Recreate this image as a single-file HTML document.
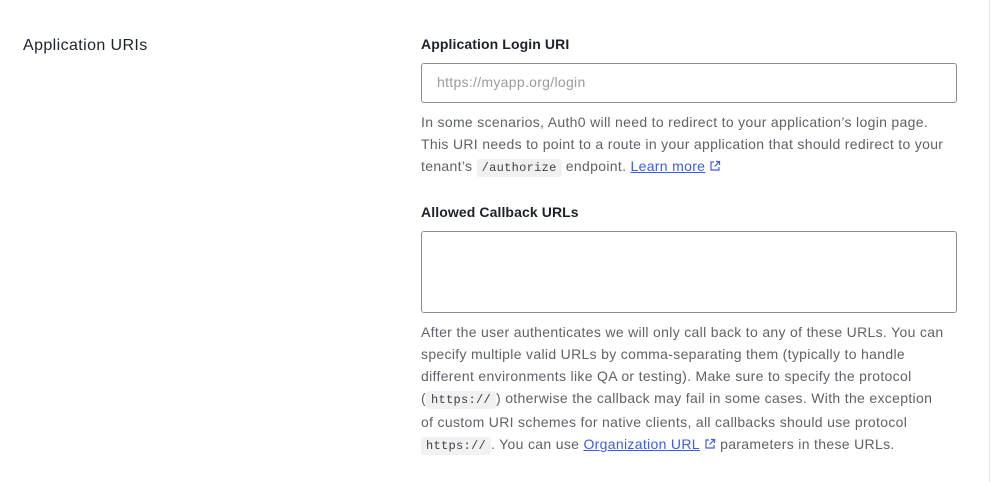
<!DOCTYPE html>
<html><head><style>
body{margin:0;width:996px;height:482px;background:#fff;font-family:"Liberation Sans",sans-serif;color:#1e212a;position:relative;overflow:hidden}
.vl{position:absolute;left:989px;top:0;width:1px;height:482px;background:#e6e6e6}
.h{position:absolute;left:23px;top:37px;font-size:16px;letter-spacing:0.4px}
.col{position:absolute;left:421px;width:560px}
.lab{font-size:14px;font-weight:bold;color:#1e212a;letter-spacing:0.1px}
.box{border:1px solid #8c8c8c;border-radius:3px;box-sizing:border-box;width:536px}
.p{font-size:14px;line-height:22px;color:#606269;letter-spacing:0.32px;white-space:nowrap}
code{font-family:"Liberation Mono",monospace;font-size:12px;background:#f1f1f1;color:#3f4148;padding:2px 5px;border-radius:3px;letter-spacing:0.3px}
a{color:#3d5ce6;text-decoration:underline}
.ic{display:inline-block;vertical-align:-1px;margin-left:4px}
</style></head><body>
<div class="vl"></div>
<div class="h">Application URIs</div>
<div class="col" style="top:36px"><div class="lab">Application Login URI</div></div>
<div class="col" style="top:63px"><div class="box" style="height:40px;padding:10px 15px;font-size:14px;color:#9a9ba0;letter-spacing:0.3px">https://myapp.org/login</div></div>
<div class="col p" style="top:111px">In some scenarios, Auth0 will need to redirect to your application’s login page.<br>This URI needs to point to a route in your application that should redirect to your<br>tenant’s <code>/authorize</code> endpoint. <a>Learn more</a><svg class="ic" width="12" height="12" viewBox="0 0 12 12" fill="none" stroke="#3d5ce6" stroke-width="1.2"><path d="M5 2H2v8h8V7M7 1.5h3.5V5M10.5 1.5L5.5 6.5"/></svg></div>
<div class="col" style="top:204px"><div class="lab">Allowed Callback URLs</div></div>
<div class="col" style="top:231px"><div class="box" style="height:82px"></div></div>
<div class="col p" style="top:321px">After the user authenticates we will only call back to any of these URLs. You can<br>specify multiple valid URLs by comma-separating them (typically to handle<br>different environments like QA or testing). Make sure to specify the protocol<br>(<code>https://</code>) otherwise the callback may fail in some cases. With the exception<br>of custom URI schemes for native clients, all callbacks should use protocol<br><code>https://</code>. You can use <a>Organization URL</a><svg class="ic" width="12" height="12" viewBox="0 0 12 12" fill="none" stroke="#3d5ce6" stroke-width="1.2"><path d="M5 2H2v8h8V7M7 1.5h3.5V5M10.5 1.5L5.5 6.5"/></svg> parameters in these URLs.</div>
</body></html>
